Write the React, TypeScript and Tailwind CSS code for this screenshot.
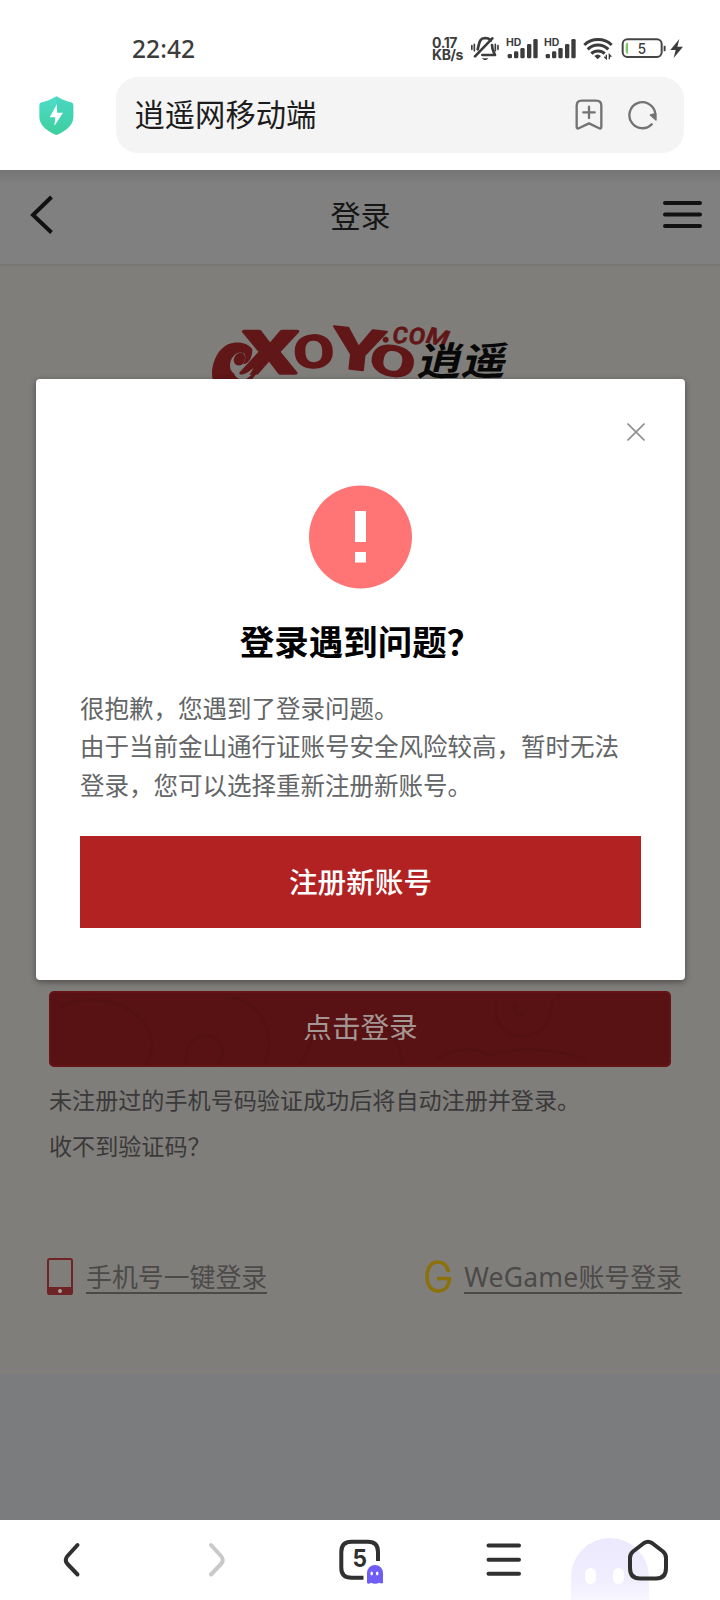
import React from "react";

function StatusBar() {
  return (
    <div className="flex h-[77px] shrink-0 items-start pl-[132px] pr-[36px] text-[#3c3c3c]">
      <div className="mt-[32px] font-['Noto_Sans'] text-[24.5px] font-medium leading-[33px] tracking-[0.1px]">22:42</div>
      <div className="ml-auto mt-[37px] w-[36px] whitespace-nowrap font-['Inter'] text-[14px] font-bold leading-[12px] tracking-[-0.4px]">
        0.17<br />KB/s
      </div>
      <svg className="ml-[3px] mt-[36px]" width="28" height="26" viewBox="332 48 84 78" fill="none" stroke="#3c3c3c" strokeWidth="8" strokeLinecap="round">
        <path d="M396 55 L344 109" />
        <path d="M352 88 C357 70 356 55 374 54 C383 54 388 57 391 62" />
        <path d="M395 75 C395 89 400 96 404 105 H366" strokeLinejoin="round" />
        <path d="M365 115 H384 C380 122 369 122 365 115Z" fill="#3c3c3c" stroke="none" />
        <path d="M342 73 V92 M334.500 77 V88 M405 73 V92 M413 77 V88" strokeWidth="5" />
      </svg>
      <Signal className="ml-[7px]" />
      <Signal className="ml-[6px]" />
      <svg className="ml-[7px] mt-[36px]" width="30" height="26" viewBox="670 48 90 78" fill="none" stroke="#3c3c3c" strokeWidth="9">
        <path d="M674 75 C696 53 734 53 756 75" />
        <path d="M684 88 C701 71 729 71 746 88" />
        <path d="M695 101 C706 90 724 90 735 101" />
        <path d="M704 108 Q714 99 724 108 L714 118Z" fill="#3c3c3c" stroke="none" />
        <path d="M740 104 V116 L734 110 M749 118 V104 L755 110" strokeWidth="4" />
      </svg>
      <svg className="ml-[8px] mt-[36px]" width="63" height="26" viewBox="784 48 189 78" fill="none">
        <rect x="789" y="58" width="117" height="53" rx="14" stroke="#454545" strokeWidth="6" />
        <path d="M805 68 H803 Q798 69 798 76 V93 Q798 101 804 101 H805Z" fill="#7cc962" />
        <path d="M912 77 H915 Q918 77 918 81 V90 Q918 94 915 94 H912Z" fill="#454545" />
        <text x="847" y="101" textAnchor="middle" fontFamily="Inter" fontSize="43" fontWeight="500" fill="#3c3c3c" textLength="25" lengthAdjust="spacingAndGlyphs">5</text>
        <path d="M959 57 L932 90 H948 L942 114 L970 80 H953Z" fill="#3c3c3c" />
      </svg>
    </div>
  );
}

function Signal({ className }: { className: string }) {
  return (
    <svg className={`${className} mt-[36px]`} width="32" height="26" viewBox="437 48 96 78" fill="#3c3c3c">
      <text x="437" y="77" fontFamily="Inter" fontSize="29" fontWeight="700" textLength="46" lengthAdjust="spacingAndGlyphs">HD</text>
      <rect x="442" y="102" width="13" height="13" rx="4" />
      <rect x="461" y="94" width="13" height="21" rx="4" />
      <rect x="480" y="84" width="13" height="31" rx="4" />
      <rect x="500" y="72" width="13" height="43" rx="4" />
      <rect x="519" y="57" width="13" height="58" rx="4" />
    </svg>
  );
}

function AddressBar() {
  return (
    <div className="flex h-[93px] shrink-0 items-start pl-[39px]">
      <svg className="mt-[19px]" width="35" height="39" viewBox="118 227 103 117">
        <defs>
          <linearGradient id="shield" x1="0" y1="0" x2="0" y2="1">
            <stop offset="0" stopColor="#4fdccb" />
            <stop offset="1" stopColor="#3dcf9b" />
          </linearGradient>
        </defs>
        <path d="M169 228 Q195 243 213 246 Q220 248 220 255 V291 C219 320 188 337 169 344 C150 337 119 320 118 291 V255 Q118 248 125 246 Q144 243 169 228Z" fill="url(#shield)" />
        <path d="M169 344 V228 Q195 243 213 246 Q220 248 220 255 V291 C219 320 188 337 169 344Z" fill="#3fcfae" opacity=".35" />
        <path d="M171 251 L149 291 H166 L163 317 L189 277 H171Z" fill="#fff" />
      </svg>
      <div className="ml-[42px] flex h-[76px] w-[568px] items-center rounded-[22px] bg-[#f4f4f4] pl-[18.5px]">
        <span className="mb-[5px] text-[30.3px] leading-[40px] text-[#1c1c1c]">逍遥网移动端</span>
        <svg className="ml-auto" width="28" height="32" viewBox="647 236 84 96" fill="none" stroke="#737373" strokeWidth="7" strokeLinecap="round" strokeLinejoin="round">
          <path d="M667 241 H711 Q726 241 726 256 V320 Q726 327 718 323 L689 309 L660 323 Q652 327 652 320 V256 Q652 241 667 241Z" />
          <path d="M672 276 H706 M689 259 V293" />
        </svg>
        <svg className="ml-[25px] mr-[26px]" width="30" height="30" viewBox="804 239 90 90" fill="none">
          <path d="M875 312 A39 39 0 1 1 885 275" stroke="#737373" strokeWidth="7" strokeLinecap="round" />
          <path d="M871 284 L888 279 V299Z" fill="#737373" stroke="#737373" strokeWidth="4" strokeLinejoin="round" />
        </svg>
      </div>
    </div>
  );
}

function Logo() {
  return (
    <svg className="mx-auto mt-[44px] block" width="320" height="100" viewBox="0 0 960 300" overflow="visible">
      <g fill="#611617" stroke="#611617" strokeLinejoin="round" fontFamily="Roboto, sans-serif" fontWeight="700">
        <text transform="translate(122 188) skewX(-3)" fontSize="176" strokeWidth="10" textLength="166" lengthAdjust="spacingAndGlyphs">X</text>
        <text transform="translate(282 176) rotate(-3)" fontSize="137" strokeWidth="4" textLength="124" lengthAdjust="spacingAndGlyphs">O</text>
        <text transform="translate(390 170) rotate(6)" fontSize="172" strokeWidth="6" textLength="158" lengthAdjust="spacingAndGlyphs">Y</text>
        <text transform="translate(502 182) rotate(12)" fontSize="126" strokeWidth="4" textLength="138" lengthAdjust="spacingAndGlyphs">O</text>
      </g>
      <path d="M157 118 C145 99 112 91 84 103 C57 116 39 149 36 184 C35 210 43 232 62 240 C104 252 146 226 170 190 C160 190 152 197 144 203 C132 213 112 210 104 195 C94 178 98 149 114 143 C124 140 130 148 123 162 C142 166 158 145 157 118Z" fill="#611617" />
      <path d="M132 130 C112 120 90 142 90 166 C90 184 100 194 118 196 C136 193 148 185 160 174 C154 190 143 202 127 208 C118 201 106 188 104 172 C103 164 106 158 111 158 C114 169 128 168 132 157 C138 146 137 136 132 130Z" fill="#807e7b" />
      <path d="M131 131 C117 123 102 136 101 152 C104 170 125 170 130 158 C137 150 137 138 131 131Z" fill="#611617" />
      <g fill="#611617" stroke="#611617" strokeWidth="2" fontFamily="Roboto, sans-serif" fontWeight="600">
        <circle cx="557" cy="89" r="8" />
        <text transform="translate(575 100) rotate(-1) skewX(-8)" fontSize="68" textLength="46" lengthAdjust="spacingAndGlyphs">C</text>
        <text transform="translate(623 101) skewX(-8)" fontSize="68" textLength="50" lengthAdjust="spacingAndGlyphs">O</text>
        <text transform="translate(672 96) rotate(13) skewX(-10)" fontSize="68" textLength="66" lengthAdjust="spacingAndGlyphs">M</text>
      </g>
      <text transform="translate(648 194) skewX(-14)" fontSize="116" fontFamily="Noto Sans CJK SC, sans-serif" fontWeight="700" textLength="266" lengthAdjust="spacingAndGlyphs" fill="#080808">逍遥</text>
    </svg>
  );
}

function PageHeader() {
  return (
    <header className="flex h-[96px] shrink-0 items-start justify-between border-b-2 border-[#787675] bg-[#808080] bg-[linear-gradient(#757575,#808080_14px)] pl-[30px] pr-[18px]">
      <svg className="mt-[25px]" width="39" height="40" viewBox="0 0 39 40" fill="none" stroke="#111" strokeWidth="4">
        <path d="M21.500 2 L3 20 L21.500 37.500" />
      </svg>
      <h1 className="-ml-[11px] mt-[22px] text-[30px] leading-[44px] text-[#161616]">登录</h1>
      <svg className="mt-[30px]" width="39" height="30" viewBox="0 0 39 30" stroke="#111" strokeWidth="4" strokeLinecap="round">
        <path d="M2 3 H37 M2 14.500 H37 M2 26 H37" />
      </svg>
    </header>
  );
}

function LoginButton() {
  return (
    <button className="relative flex h-[76px] w-[622px] items-center justify-center overflow-hidden rounded-[5px] border-2 border-[#651314] bg-[#591213] text-[28.6px] text-[#a39693]">
      <svg className="absolute inset-0" width="618" height="72" viewBox="0 0 618 72" fill="none" stroke="#541112" strokeWidth="3">
        <path d="M8 14 C50 -5 95 15 101 48 Q102 62 92 74 M180 4 C214 12 226 44 212 74 M135 74 C132 49 148 38 162 44 C174 50 174 62 166 74 M248 74 L268 34 M335 34 Q350 50 352 74 M446 8 C438 35 464 50 485 40 C506 31 493 10 509 2 M464 10 Q462 25 474 20 M385 66 Q415 50 438 62 Q485 50 535 66" />
      </svg>
      <span className="z-10 mb-[6px] ml-[1px]">点击登录</span>
    </button>
  );
}

function OtherLogins() {
  return (
    <div className="mt-[89px] flex items-start justify-between pl-[47px] pr-[38px] text-[25.9px] leading-[32px] text-[#4b4a49]">
      <a className="flex items-start">
        <svg className="mt-[1px]" width="26" height="37" viewBox="0 0 26 37">
          <rect x="1" y="1" width="24" height="35" rx="2" fill="none" stroke="#6e2424" strokeWidth="2" />
          <path d="M0 29 H26 V34 Q26 37 23 37 H3 Q0 37 0 34Z" fill="#6e2424" />
          <circle cx="13" cy="33" r="2" fill="#aaa19e" />
        </svg>
        <span className="ml-[13px] mt-[3px] block h-[34px] border-b-2 border-[#4b4a49]">手机号一键登录</span>
      </a>
      <a className="flex items-start">
        <svg className="mt-[3px]" width="27" height="33" viewBox="0 0 27 33" fill="none" stroke="#8a7109" strokeWidth="3.600" strokeLinejoin="round">
          <path d="M23.500 12 C22 5 18 2 13 2 C6 2 2 8 2 16.500 C2 25 6 31 13 31 C20 31 24 26 24.500 18.500 H12" />
        </svg>
        <span className="ml-[12px] mt-[3px] block h-[34px] whitespace-nowrap border-b-2 border-[#4b4a49]">
          <span className="font-['Noto_Sans'] text-[26.5px] tracking-[0.2px]">WeGame</span>账号登录
        </span>
      </a>
    </div>
  );
}

function Dialog() {
  return (
    <section className="absolute left-[36px] top-[209px] flex h-[601px] w-[649px] flex-col rounded-[4px] bg-white px-[44px] shadow-[0_2px_6px_rgba(0,0,0,0.4)]">
      <svg className="ml-auto mr-[-4px] mt-[44px] shrink-0" width="18" height="18" viewBox="0 0 18 18" stroke="#8f8f8f" strokeWidth="1.600">
        <path d="M.5 .5 L17.500 17.500 M17.500 .5 L.5 17.500" />
      </svg>
      <svg className="mx-auto mt-[44px] shrink-0" width="103" height="104" viewBox="0 0 103 104">
        <circle cx="51.500" cy="52" r="51.500" fill="#ff7474" />
        <path d="M46 26 H57 V57 H46Z M46 67 H57 V77.500 H46Z" fill="#fff" />
      </svg>
      <h2 className="mt-[26px] text-center text-[34.5px] font-bold leading-[50px] text-black">登录遇到问题？</h2>
      <p className="mt-[24px] w-[561px] whitespace-nowrap text-[24.5px] leading-[38.300px] text-[#636567]">
        很抱歉，您遇到了登录问题。<br />
        由于当前金山通行证账号安全风险较高，暂时无法<br />
        登录，您可以选择重新注册新账号。
      </p>
      <button className="mt-[32px] h-[92px] w-[561px] shrink-0 bg-[#b22222] text-[28.6px] font-medium text-white">注册新账号</button>
    </section>
  );
}

function BottomNav() {
  return (
    <nav className="flex h-[80px] shrink-0 bg-white">
      <svg width="720" height="80" viewBox="0 0 720 80" fill="none" strokeLinecap="round" strokeLinejoin="round">
        <defs>
          <linearGradient id="ghost" x1="0" y1="18" x2="0" y2="80" gradientUnits="userSpaceOnUse">
            <stop offset="0" stopColor="#ece9fe" />
            <stop offset=".65" stopColor="#f0edfe" />
            <stop offset="1" stopColor="#f8f6ff" />
          </linearGradient>
        </defs>
        <path d="M571 80 V57 A39 39 0 0 1 649 57 V80Z" fill="url(#ghost)" />
        <rect x="585" y="48" width="11" height="16" rx="5.500" fill="#fff" />
        <rect x="613" y="48" width="11" height="16" rx="5.500" fill="#fff" />
        <g stroke="#303030" strokeWidth="4">
          <path d="M77.500 25 L67.500 36 Q64 40 67.500 44 L77.500 54.500" />
          <path d="M211 25 L221 36 Q224.500 40 221 44 L211 54.500" stroke="#c9c9c9" />
          <path d="M378 41 V32 Q378 21.800 368 21.800 H351.500 Q341.300 21.800 341.300 32 V48 Q341.300 57.800 351.500 57.800 H363.500" strokeLinecap="butt" />
          <path d="M488.500 25.500 H519 M488.500 39.700 H519 M488.500 53.700 H519" />
          <path d="M644 23 Q648 20.500 652 23 L663 31.500 Q666 34 666 38 V48 Q666 58.500 656 58.500 H640 Q630 58.500 630 48 V38 Q630 34 633 31.500Z" />
        </g>
        <text x="359.800" y="46.500" textAnchor="middle" fontFamily="Inter" fontWeight="700" fontSize="24.500" textLength="14.500" lengthAdjust="spacingAndGlyphs" fill="#303030">5</text>
        <path d="M367 63 V53 A8 8 0 0 1 383 53 V63 Q381 64 379.500 62.700 Q375 65 371 62.700 Q369 64.500 367 63Z" fill="#705df5" />
        <ellipse cx="371.700" cy="53.500" rx="1.200" ry="1.900" fill="#fff" />
        <ellipse cx="377.200" cy="53.500" rx="1.200" ry="1.900" fill="#fff" />
      </svg>
    </nav>
  );
}

export default function App() {
  return (
    <div className="flex h-[1600px] w-[720px] flex-col overflow-hidden bg-white font-['Noto_Sans_CJK_SC',sans-serif]">
      <StatusBar />
      <AddressBar />
      <main className="relative flex h-[1350px] shrink-0 flex-col bg-[#7b7c7e]">
        <PageHeader />
        <div className="h-[1108px] shrink-0 bg-[#807e7b]">
          <Logo />
          <div className="mt-[581px] px-[49px] text-[23.1px] leading-[46px] text-[#3a3939]">
            <LoginButton />
            <p className="mt-[9px]">未注册过的手机号码验证成功后将自动注册并登录。</p>
            <p>收不到验证码？</p>
          </div>
          <OtherLogins />
        </div>
        <Dialog />
      </main>
      <BottomNav />
    </div>
  );
}
